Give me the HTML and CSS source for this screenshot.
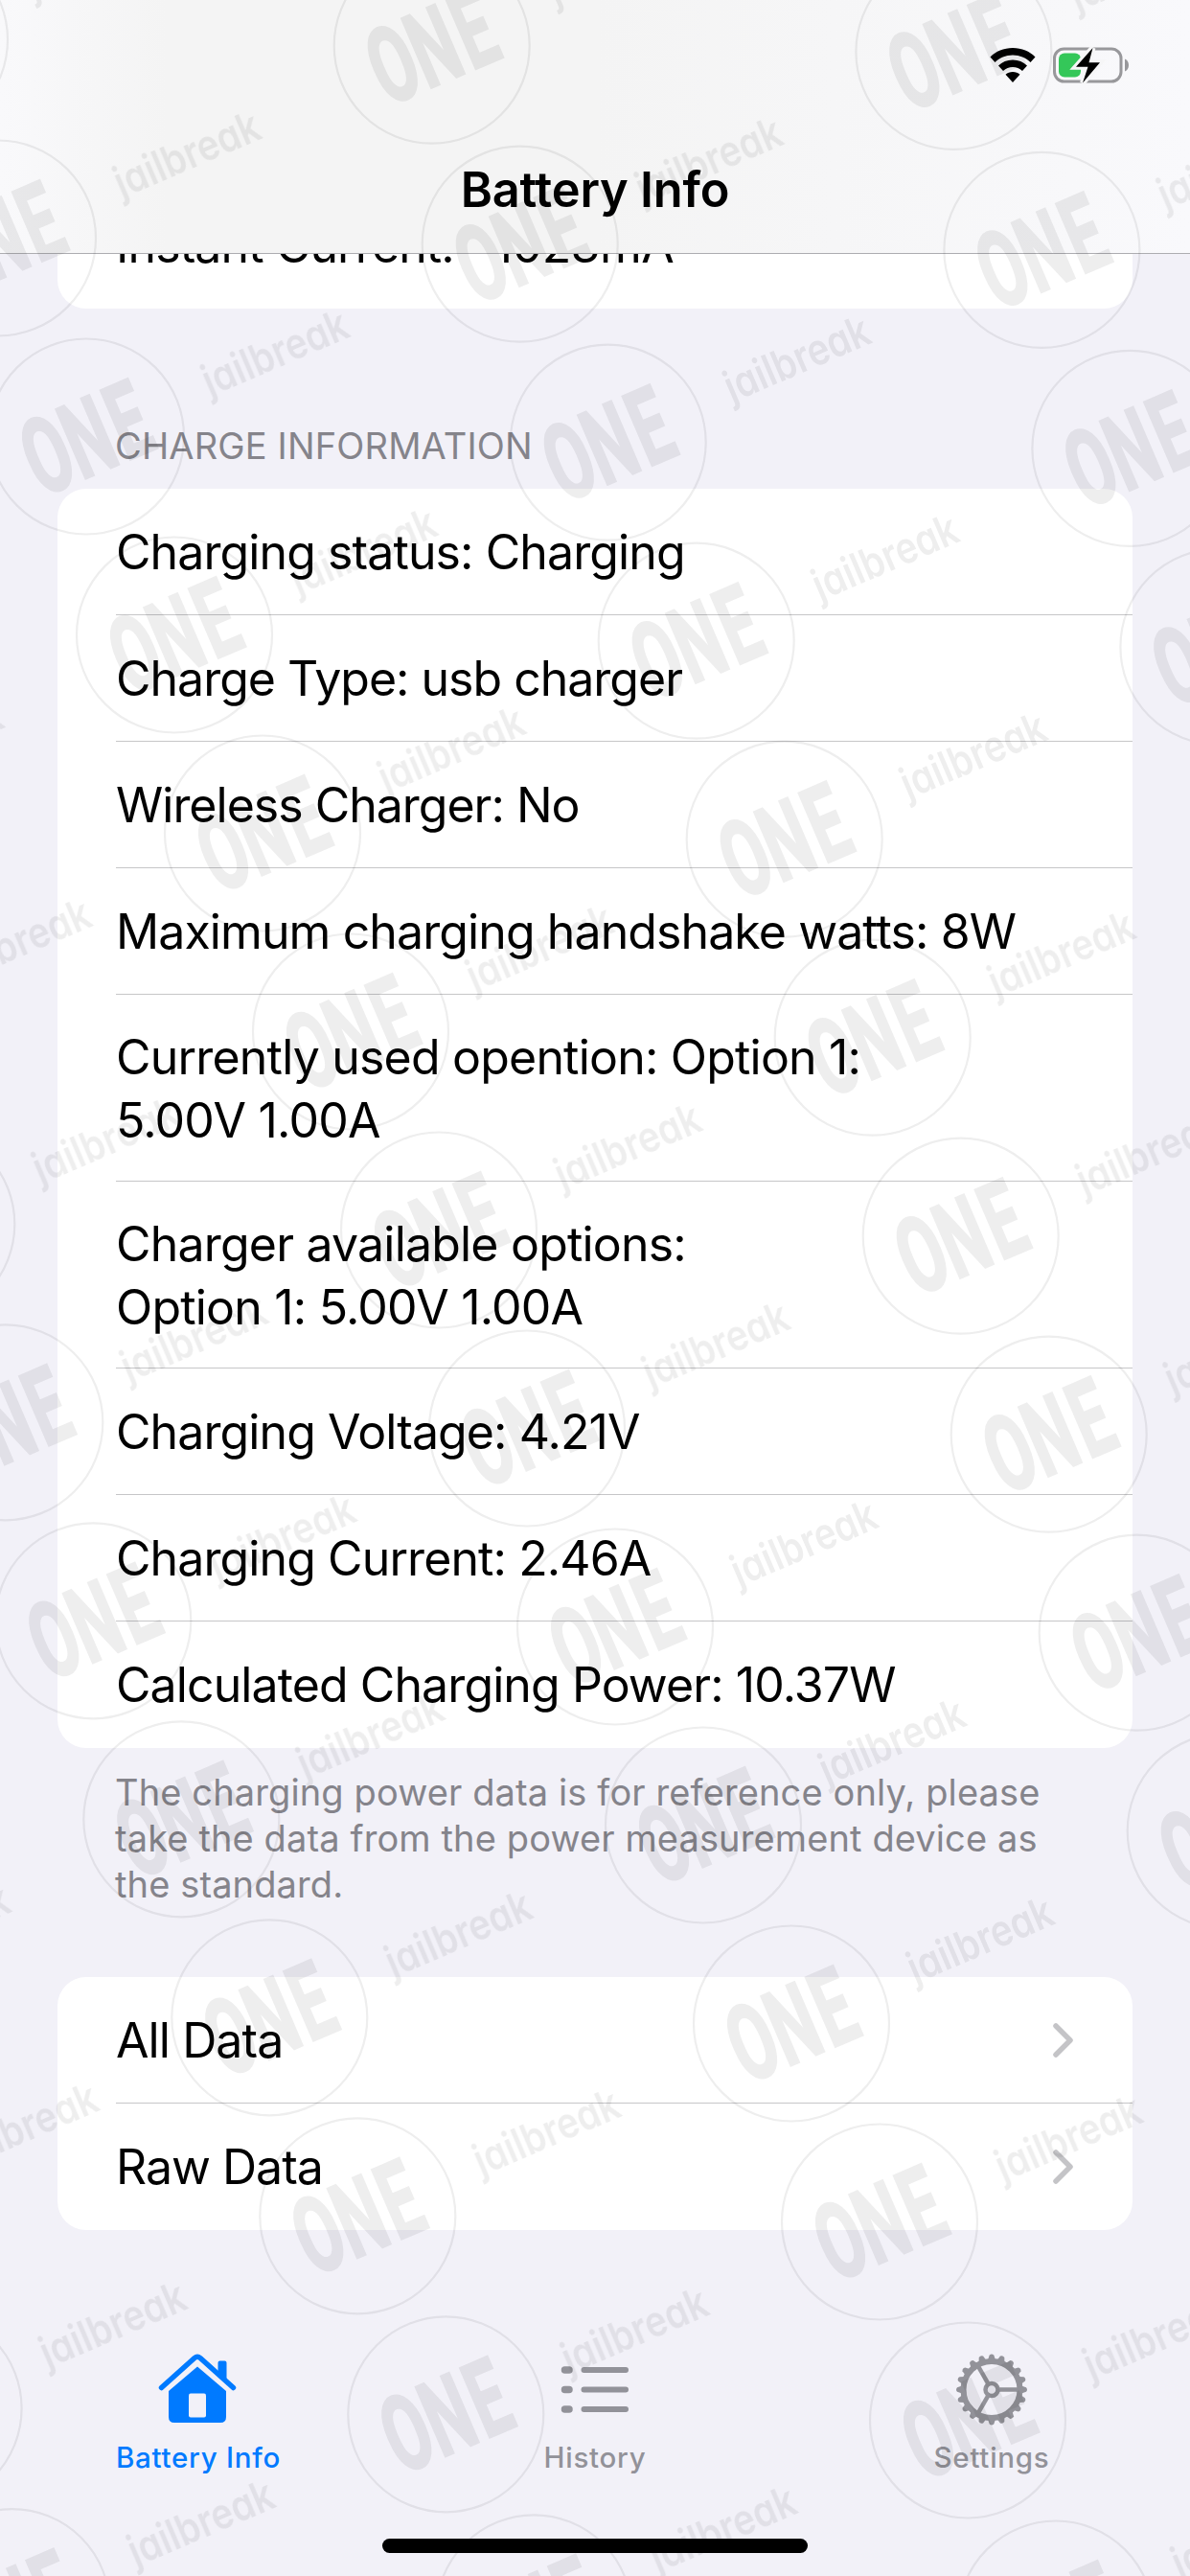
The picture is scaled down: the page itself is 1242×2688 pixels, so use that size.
FILE: index.html
```html
<!DOCTYPE html>
<html lang="en">
<head>
<meta charset="utf-8">
<title>Battery Info</title>
<link rel="stylesheet" href="styles.css">
</head>
<body>
<main class="screen">
  <header class="nav">
    <div class="status">
      <svg class="wifi" viewBox="0 0 48 36"><path d="M24 0C33.5 0 41.500 3.500 47.500 9.500L42.500 15C37.500 10.300 31.500 7.500 24 7.500S10.500 10.300 5.500 15L.5 9.500C6.500 3.500 14.500 0 24 0ZM24 12.500C30 12.500 35 14.800 39 18.500L34 24C31 21.400 28 20 24 20S17 21.400 14 24L9 18.500C13 14.800 18 12.500 24 12.500ZM24 25C27 25 29.500 26 31.500 27.800L24 36L16.500 27.800C18.500 26 21 25 24 25Z"/></svg>
      <svg class="battery" viewBox="0 0 80 40"><rect x="1.500" y="3" width="69.500" height="34" rx="10" fill="none" stroke="#98989b" stroke-width="3"/><rect x="6" y="7.500" width="23" height="25" rx="6" fill="#34c759"/><path d="M75 13.500c2.500 1 4 3.500 4 6.500s-1.500 5.500-4 6.500z" fill="#98989b"/><path d="M41.500 2L24 21.700h12.500L31 38.500 49 17.200H37.500z" fill="#000" stroke="#f6f6f7" stroke-width="6" paint-order="stroke"/></svg>
    </div>
    <h1 class="title">Battery Info</h1>
  </header>
  <section class="content">
    <div class="card card-under"><div class="row">Instant Current:<span class="value">1023mA</span></div></div>
    <h2 class="heading">CHARGE INFORMATION</h2>
    <div class="card">
      <div class="row">Charging status: Charging</div>
      <div class="row snug">Charge Type: usb charger</div>
      <div class="row snug">Wireless Charger: No</div>
      <div class="row">Maximum charging handshake watts: 8W</div>
      <div class="row tall">Currently used opention: Option 1:<br>5.00V 1.00A</div>
      <div class="row tall">Charger available options:<br>Option 1: 5.00V 1.00A</div>
      <div class="row">Charging Voltage: 4.21V</div>
      <div class="row">Charging Current: 2.46A</div>
      <div class="row">Calculated Charging Power: 10.37W</div>
    </div>
    <p class="note">The charging power data is for reference only, please<br>take the data from the power measurement device as<br>the standard.</p>
    <div class="card">
      <div class="row link">All Data<svg class="chev" viewBox="0 0 22 36"><path d="M3 3l15 15L3 33"/></svg></div>
      <div class="row link snug">Raw Data<svg class="chev" viewBox="0 0 22 36"><path d="M3 3l15 15L3 33"/></svg></div>
    </div>
  </section>
  <nav class="tabs">
    <div class="tab active">
      <svg class="icon" viewBox="1 0 84 76"><path d="M4.500 36.500L39 5.500q3-2.500 6 0L79.500 36.500" fill="none" stroke="currentColor" stroke-width="5.500" stroke-linecap="round"/><path d="M63.500 10.500q0-2 2-2h5q2 0 2 2v20l-9-8zM42 14.500L72 40v27q0 6-6 6H18q-6 0-6-6V40z" fill="currentColor"/><rect x="33" y="42.500" width="18" height="25" rx="2" fill="#f2f1f8"/></svg>
      <span>Battery Info</span>
    </div>
    <div class="tab">
      <svg class="icon" viewBox="0 0 84 76"><g stroke="currentColor" stroke-linecap="round"><path d="M10.500 18h4.500M10.500 38.500h4.500M10.500 59h4.500" stroke-width="7.500"/><path d="M30.500 18H74M30.500 38.500H74M30.500 59H74" stroke-width="6"/></g></svg>
      <span>History</span>
    </div>
    <div class="tab">
      <svg class="icon" id="gear" viewBox="0 0 84 76"></svg>
      <span>Settings</span>
    </div>
  </nav>
  <div class="home"></div>
  <svg class="watermark" viewBox="0 0 1242 2688" aria-hidden="true">
    <defs>
      <g id="mark">
        <circle r="102" fill="none" stroke="#000" stroke-width="2.200"/>
        <g transform="rotate(-23.200)">
          <text class="one" transform="scale(.6 1)" x="-113 -37 47" y="40">ONE</text>
          <text class="jail" x="135" y="13" textLength="161" lengthAdjust="spacingAndGlyphs">jailbreak</text>
        </g>
      </g>
    </defs>
    <g id="marks" opacity=".068"></g>
  </svg>
</main>
<script src="app.js"></script>
</body>
</html>
```
FILE: styles.css
```css
* { box-sizing: border-box; }
body { margin: 0; background: #f2f1f8; font-family: Inter, "Liberation Sans", sans-serif; color: #000; }
.screen { position: relative; width: 1242px; height: 2688px; overflow: hidden; display: flex; flex-direction: column; }
.nav { position: relative; z-index: 1; flex: none; height: 265px; border-bottom: 1px solid #adadb1; background: linear-gradient(90deg, #f9f9fb 0, #f4f4f4 14%, #f4f4f4 50%, #f8f8fa 90%, #f9f9fc 100%); display: flex; flex-direction: column; }
.status { height: 136px; flex: none; padding: 0 63px 0 0; display: flex; justify-content: flex-end; align-items: center; gap: 18px; }
.wifi { width: 48px; height: 36px; }
.battery { width: 80px; height: 40px; }
.title { margin: 29px 0 0; text-align: center; font-size: 50.500px; line-height: 66px; font-weight: 600; letter-spacing: -.2px; }
.content { flex: 1; padding: 0 60px; }
.card { background: #fff; border-radius: 30px; }
.card-under { margin-top: -75px; }
.value { padding-left: 41px; letter-spacing: -.5px; }
.row { position: relative; height: 132px; padding-left: 61px; display: flex; align-items: center; font-size: 50px; line-height: 66px; letter-spacing: -.9px; white-space: pre; }
.row + .row::before { content: ""; position: absolute; left: 61px; right: 0; top: -1px; height: 1px; background: #c6c6c8; }
.snug { letter-spacing: -1px; }
.tall { height: 195px; letter-spacing: -.8px; }
.heading { margin: 117px 0 0 60px; height: 71px; font-size: 38px; line-height: 52px; font-weight: 400; color: #85848b; letter-spacing: .15px; }
.note { margin: 22px 0 0 60px; height: 217px; font-size: 38px; line-height: 48px; color: #85848b; white-space: nowrap; letter-spacing: .12px; }
.link { justify-content: space-between; padding-right: 61px; }
.chev { width: 22px; height: 36px; fill: none; stroke: #c4c4c7; stroke-width: 5.500; stroke-linecap: round; stroke-linejoin: round; }
.tabs { flex: none; height: 249px; display: grid; grid-template-columns: repeat(3, 1fr); }
.tab { display: flex; flex-direction: column; align-items: center; color: #929299; font-size: 29.500px; line-height: 36px; font-weight: 500; letter-spacing: .75px; padding-top: 16px; gap: 15px; }
.active { color: #007aff; }
.icon { width: 84px; height: 76px; overflow: visible; }
.home { position: absolute; left: 399px; top: 2649px; width: 444px; height: 15px; border-radius: 8px; background: #000; }
.watermark { position: absolute; z-index: 2; left: 0; top: 0; width: 1242px; height: 2688px; pointer-events: none; }
.one { font: 700 110px Roboto, sans-serif; stroke: #000; stroke-width: 3px; }
.jail { font: 600 45.500px Inter, sans-serif; font-feature-settings: "cv11"; }
```
FILE: app.js
```js
const NS = 'http://www.w3.org/2000/svg';

// Repeating watermark lattice
let marks = '';
for (let i = -5; i < 13; i++) {
  for (let j = -4; j < 5; j++) {
    const x = 182 + i * 92 + j * 544.7;
    const y = 662.5 + i * 207 + j * 6.2;
    if (x > -420 && x < 1380 && y > -150 && y < 2860) {
      marks += `<use href="#mark" x="${x}" y="${y}"/>`;
    }
  }
}
document.getElementById('marks').innerHTML = marks;

// Gear with 20 teeth and three spokes
let gear = '<circle r="29.500" stroke-width="6"/><circle r="6.500" stroke-width="4.500"/>';
for (let k = 0; k < 20; k++) {
  gear += `<path transform="rotate(${k * 18})" d="M31-4L36-2.300Q38 0 36 2.300L31 4z" fill="currentColor" stroke="none"/>`;
}
for (const a of [0, 120, 240]) {
  gear += `<path transform="rotate(${a})" d="M8 0H29" stroke-width="4.500"/>`;
}
document.getElementById('gear').innerHTML =
  `<g transform="translate(42 38.500)" fill="none" stroke="currentColor">${gear}</g>`;
```
